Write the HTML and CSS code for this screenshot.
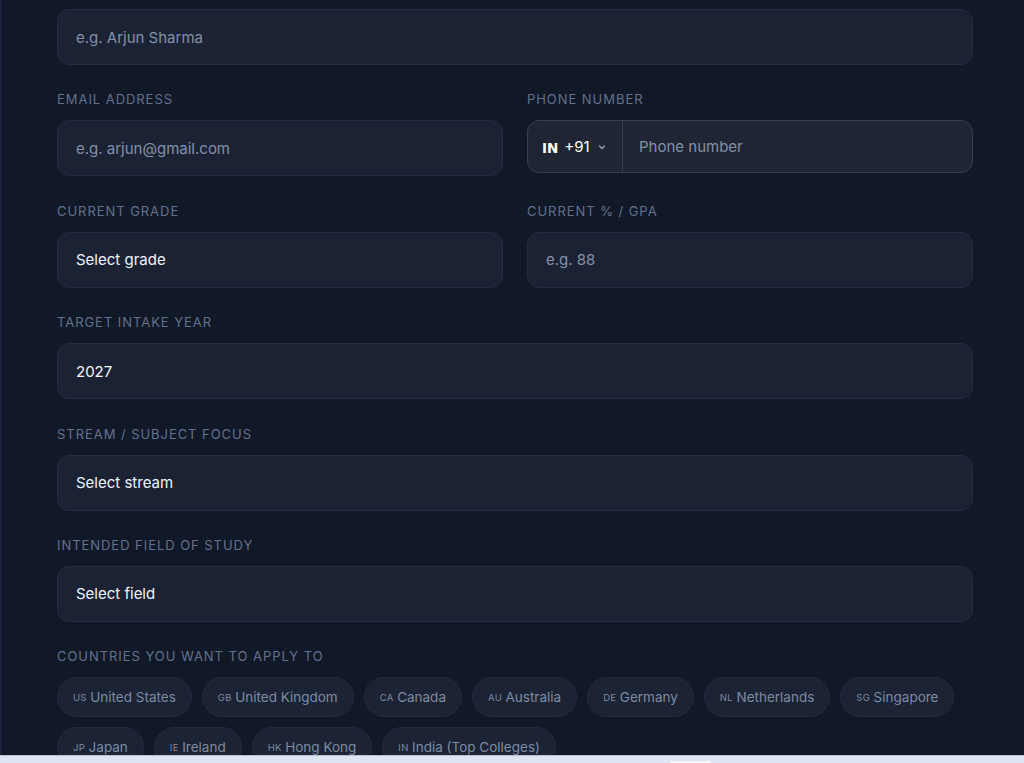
FILE: index.html
```html
<!DOCTYPE html>
<html lang="en">
<head>
    <meta charset="UTF-8">
    <meta name="viewport" content="width=device-width, initial-scale=1.0">
    <title>Student Profile</title>
    <link rel="stylesheet" href="styles.css">
</head>
<body>
    <div class="page">
        <form class="form">
            <!-- Full name (label scrolled off above) -->
            <div class="field">
                <div class="input placeholder">e.g. Arjun Sharma</div>
            </div>

            <div class="row">
                <div class="field">
                    <label class="label">Email address</label>
                    <div class="input placeholder">e.g. arjun@gmail.com</div>
                </div>
                <div class="field">
                    <label class="label">Phone number</label>
                    <div class="phone">
                        <div class="dial">
                            <span class="flag">IN</span>
                            <span class="code">+91</span>
                            <svg class="chev" width="10" height="10" viewBox="0 0 10 10"><path d="M2.5 4 L5 6.5 L7.5 4" fill="none" stroke="#9ca3af" stroke-width="1.3" stroke-linecap="round" stroke-linejoin="round"/></svg>
                        </div>
                        <div class="phone-num placeholder">Phone number</div>
                    </div>
                </div>
            </div>

            <div class="row">
                <div class="field">
                    <label class="label">Current grade</label>
                    <div class="input">Select grade</div>
                </div>
                <div class="field">
                    <label class="label">Current % / GPA</label>
                    <div class="input placeholder">e.g. 88</div>
                </div>
            </div>

            <div class="field">
                <label class="label">Target intake year</label>
                <div class="input">2027</div>
            </div>

            <div class="field">
                <label class="label">Stream / Subject focus</label>
                <div class="input">Select stream</div>
            </div>

            <div class="field">
                <label class="label">Intended field of study</label>
                <div class="input">Select field</div>
            </div>

            <div class="field">
                <label class="label">Countries you want to apply to</label>
                <div class="chips">
                    <span class="chip"><small>US</small> United States</span>
                    <span class="chip"><small>GB</small> United Kingdom</span>
                    <span class="chip"><small>CA</small> Canada</span>
                    <span class="chip"><small>AU</small> Australia</span>
                    <span class="chip"><small>DE</small> Germany</span>
                    <span class="chip"><small>NL</small> Netherlands</span>
                    <span class="chip"><small>SG</small> Singapore</span>
                    <span class="chip"><small>JP</small> Japan</span>
                    <span class="chip"><small>IE</small> Ireland</span>
                    <span class="chip"><small>HK</small> Hong Kong</span>
                    <span class="chip"><small>IN</small> India (Top Colleges)</span>
                </div>
            </div>
        </form>
    </div>

    <!-- window bottom strip -->
    <div class="taskbar"><span class="task-tab"></span></div>
</body>
</html>
```

FILE: styles.css
```css
/* General styles */
html, body {
    margin: 0;
    padding: 0;
    height: 100%;
    overflow: hidden;
}

body {
    background-color: #111827;
    color: #f1f5f9;
    font-family: Inter, "DejaVu Sans", sans-serif;
}

.page {
    height: 755px;
    overflow: hidden;
    border-left: 2px solid #18223a;
    box-sizing: border-box;
    padding: 9px 51px 0 55px;
}

.form {
    display: flex;
    flex-direction: column;
    gap: 26.4px;
}

/* Fields */
.row {
    display: grid;
    grid-template-columns: 1fr 1fr;
    gap: 24px;
}

.field {
    display: flex;
    flex-direction: column;
}

.label {
    font-size: 13px;
    line-height: 16px;
    letter-spacing: 0.95px;
    text-transform: uppercase;
    color: #62728e;
    margin-bottom: 13px;
}

.input {
    height: 56px;
    box-sizing: border-box;
    display: flex;
    align-items: center;
    padding: 0 18px;
    background: #1b2234;
    border: 1px solid #232d43;
    border-radius: 12px;
    font-size: 15px;
    color: #f1f5f9;
}

.placeholder {
    color: #8391a8;
}

/* Phone input */
.phone {
    height: 53px;
    box-sizing: border-box;
    display: flex;
    align-items: stretch;
    background: #1f2533;
    border: 1.5px solid #363f4f;
    border-radius: 12px;
}

.dial {
    display: flex;
    align-items: center;
    gap: 6px;
    padding: 0 14px;
    border-right: 1px solid #363f4f;
    width: 95px;
    box-sizing: border-box;
}

.flag {
    font-family: "DejaVu Sans", sans-serif;
    font-weight: bold;
    font-size: 13.5px;
    color: #fff;
    margin-top: 3px;
}

.code {
    font-size: 15px;
    color: #fff;
}

.chev {
    margin-left: 1px;
}

.phone-num {
    display: flex;
    align-items: center;
    padding-left: 16px;
    font-size: 15px;
}

/* Country chips */
.chips {
    display: flex;
    flex-wrap: wrap;
    gap: 10px;
}

.chip {
    height: 40px;
    box-sizing: border-box;
    display: inline-flex;
    align-items: center;
    gap: 3.5px;
    padding: 0 15px;
    background: #1b2334;
    border: 1px solid #222c41;
    border-radius: 20px;
    font-size: 13.5px;
    color: #7d8ba3;
}

.chip small {
    font-size: 9.5px;
    letter-spacing: 0.3px;
    color: #7d8ba3;
}

/* Bottom strip */
.taskbar {
    height: 8px;
    background: #dde4f2;
    border-top: 1px solid #b8c0cf;
    position: relative;
}

.task-tab {
    position: absolute;
    left: 670px;
    top: 5px;
    width: 40px;
    height: 4px;
    background: #f4f6fb;
}
```
